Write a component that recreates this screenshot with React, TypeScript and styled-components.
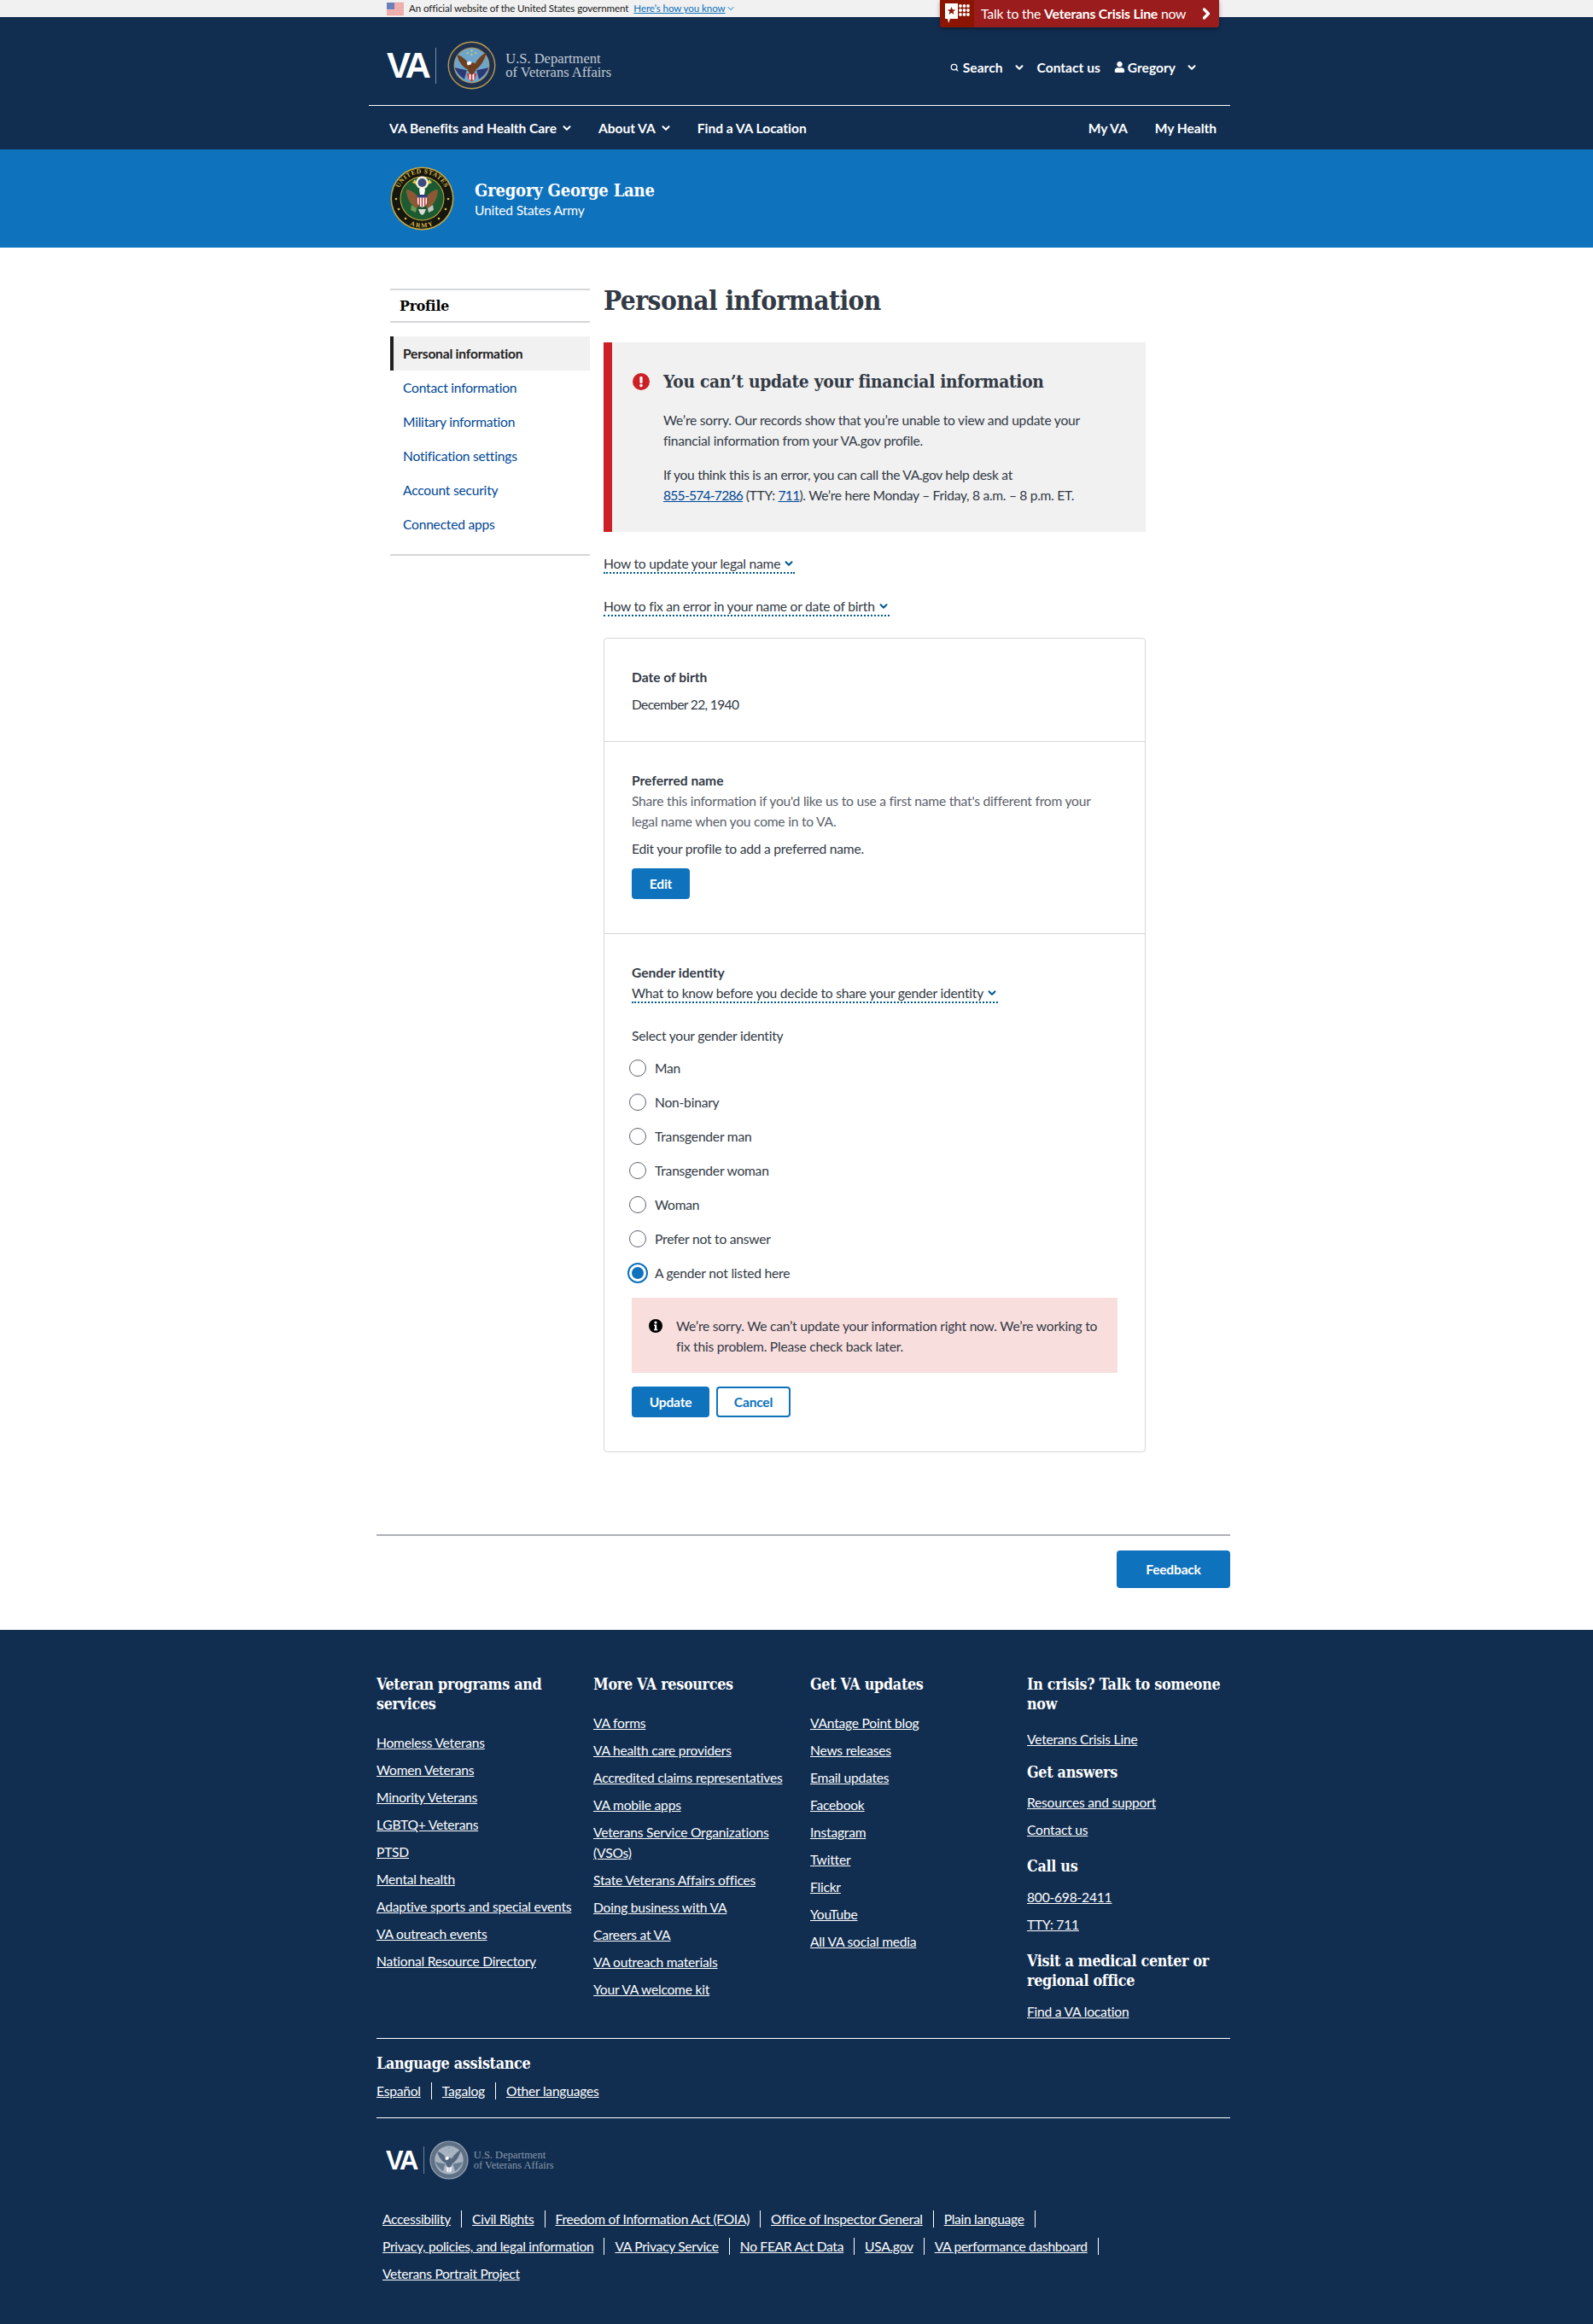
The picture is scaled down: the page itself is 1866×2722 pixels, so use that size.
import React from "react";
import styled, { createGlobalStyle } from "styled-components";
import { ChevronDown, ChevronRight, Search } from "lucide-react";
import { FaUser } from "react-icons/fa";

const SANS = `"Lato", "Noto Sans", sans-serif`;
const SERIF = `"DejaVu Serif Condensed", "DejaVu Serif", serif`;
const NAVY = "#112e51";
const BLUE = "#0e72bd";
const LINK = "#004795";

const Global = createGlobalStyle`
  html, body { margin: 0; padding: 0; background: #fff; }
  body { font-family: ${SANS}; font-size: 16px; line-height: 24px; color: #323a45; letter-spacing: -0.22px; }
  * { box-sizing: border-box; }
  ul { list-style: none; margin: 0; padding: 0; }
  p, h1, h2, h3, h4 { margin: 0; }
`;

const TopBar = styled.div`
  position: relative; height: 20px; background: #f1f1f1;
`;
const TopInner = styled.div`
  margin-left: 453px; height: 20px; display: flex; align-items: center; gap: 6px;
  font-size: 11.6px; line-height: 20px; color: #212121; letter-spacing: -0.1px;
`;
const HowLink = styled.a`
  margin-left: 0; color: ${BLUE}; text-decoration: underline; display: inline-flex; align-items: center;
`;
const CrisisBar = styled.div`
  position: absolute; left: 1101px; top: 0; width: 327px; height: 32px; background: #9b1c1c;
  border-radius: 0 0 3px 3px; box-shadow: 0 2px 5px rgba(0,0,0,.35); display: flex; align-items: center;
  color: #fff; font-size: 15.8px; z-index: 2; overflow: hidden;
`;
const CrisisIconBox = styled.div`
  width: 40px; height: 32px; background: #8b1500; display: flex; align-items: center; justify-content: center; flex: none;
`;
const CrisisText = styled.span`
  margin-left: 8px; flex: 1; white-space: nowrap; b { font-weight: 700; }
`;
const CrisisArrow = styled.span`
  display: flex; margin-right: 5px;
`;

const Header = styled.header`background: ${NAVY}; color: #fff;`;
const HeaderShell = styled.div`margin-left: 432px; width: 1009px;`;
const BrandRow = styled.div`
  height: 104px; border-bottom: 1px solid #fff; display: flex; align-items: center; justify-content: space-between;
  padding: 0 0 0 21px; position: relative;
`;
const Brand = styled.div`
  display: flex; align-items: center; height: 58px; margin-top: 10px;
`;
const VaMark = styled.span`
  font-family: "Liberation Sans", sans-serif; font-weight: 700; font-size: ${p => p.$size}px; line-height: 1; letter-spacing: ${p => p.$ls}px; color: #fff;
`;
const BrandRule = styled.span`
  width: 1px; height: ${p => p.$h}px; background: ${p => p.$c}; margin: 0 ${p => p.$m}px 0 ${p => p.$m2}px; flex: none;
`;
const BrandName = styled.div`
  font-family: "Liberation Serif", serif; font-size: ${p => p.$size}px; line-height: ${p => p.$lh}px; color: ${p => p.$c};
  letter-spacing: 0; white-space: nowrap; margin-left: ${p => p.$m}px;
`;
const Utility = styled.div`
  display: flex; align-items: center; margin-top: 14px; padding-right: 38px; font-weight: 700; font-size: 15.6px; white-space: nowrap; letter-spacing: 0;
`;
const UtilItem = styled.span`
  display: inline-flex; align-items: center; margin-left: ${p => p.$m || 0}px; gap: ${p => p.$g || 0}px;
`;
const NavRow = styled.nav`
  height: 51px; display: flex; align-items: center; justify-content: space-between; padding: 0 16px 0 24px;
  font-weight: 700; font-size: 15.6px; white-space: nowrap; letter-spacing: -0.05px;
`;
const NavGroup = styled.div`display: flex; align-items: center; gap: ${p => p.$g}px;`;
const NavItem = styled.span`display: inline-flex; align-items: center; gap: 5px;`;

const ProfileBanner = styled.div`
  height: 115px; background: ${BLUE}; color: #fff; display: flex; align-items: center; padding-left: 457px;
`;
const BannerText = styled.div`margin-left: 24px;`;
const BannerName = styled.h1`
  font-family: ${SERIF}; font-weight: 700; font-size: 20px; line-height: 26px; letter-spacing: -0.2px;
`;
const BannerSub = styled.p`font-size: 15.6px; line-height: 20px;`;

const Main = styled.main`
  margin-left: 457px; width: 885px; padding: 42px 0 96px; display: grid; grid-template-columns: 234px 635px; column-gap: 16px; align-items: start;
`;
const Side = styled.aside`
  margin-top: 6px; border-bottom: 2px solid #d6d7d9; padding-bottom: 15px; height: 313px;
`;
const SideTitle = styled.h2`
  font-family: ${SERIF}; font-size: 17.5px; font-weight: 700; color: #000; line-height: 24px;
  border-top: 2px solid #d6d7d9; border-bottom: 2px solid #d6d7d9; height: 40px; padding: 6px 0 0 11px; margin-bottom: 16px; letter-spacing: -0.2px;
`;
const SideItem = styled.li`
  height: 40px; display: flex; align-items: center; padding-left: ${p => p.$active ? 11 : 15}px; font-size: 15.6px;
  color: ${p => p.$active ? "#212121" : LINK}; font-weight: ${p => p.$active ? 700 : 400};
  background: ${p => p.$active ? "#f1f1f1" : "transparent"};
  border-left: ${p => p.$active ? "4px solid #212121" : "0"};
`;
const Content = styled.div``;
const PageTitle = styled.h1`
  font-family: ${SERIF}; font-size: 31.4px; line-height: 40px; font-weight: 700; color: #323a45; letter-spacing: -0.55px; white-space: nowrap;
`;
const AlertBox = styled.div`
  margin-top: 29px; height: 222px; background: #f1f1f1; border-left: 10px solid #cd2026; padding: 32px 24px 0 24px; position: relative;
`;
const AlertHead = styled.h2`
  font-family: ${SERIF}; font-size: 20.7px; line-height: 28px; font-weight: 700; color: #323a45; display: flex; align-items: center; gap: 16px; letter-spacing: -0.25px; margin-left: 0; white-space: nowrap;
`;
const AlertPara = styled.p`
  margin: ${p => p.$m}px 0 0 36px; font-size: 15.6px; letter-spacing: ${p => p.$ls || -0.22}px; color: #323a45; white-space: nowrap;
  a { color: ${LINK}; text-decoration: underline; letter-spacing: -0.75px; }
`;
const Toggle = styled.div`
  display: table; margin-top: ${p => p.$m}px; font-size: 15.6px; line-height: 19px; color: #323a45; border-bottom: 2px dotted #005a8c; white-space: nowrap;
  svg { vertical-align: -1px; margin-left: 3px; }
`;
const Card = styled.section`
  margin-top: 25px; border: 1px solid #d6d7d9; border-radius: 4px;
`;
const CardSection = styled.div`
  padding: 33px 32px ${p => p.$pb}px; border-bottom: ${p => p.$last ? "0" : "1px solid #d6d7d9"};
`;
const FieldLabel = styled.h3`font-size: 15.6px; font-weight: 700; color: #323a45; line-height: 24px; letter-spacing: 0;`;
const FieldText = styled.p`
  font-size: 15.6px; margin-top: ${p => p.$m || 0}px; color: ${p => p.$muted ? "#5b616b" : "#323a45"};
`;
const DateText = styled(FieldText)`letter-spacing: -0.65px;`;
const Btn = styled.button`
  display: block; font-family: ${SANS}; font-weight: 700; font-size: 15.6px; line-height: 20px; height: ${p => p.$h || 36}px; width: ${p => p.$w}px; border-radius: 4px;
  background: ${p => p.$outline ? "#fff" : BLUE}; color: ${p => p.$outline ? BLUE : "#fff"}; border: ${p => p.$outline ? `2px solid ${BLUE}` : "0"}; padding: 0; letter-spacing: -0.22px;
`;
const EditWrap = styled.div`margin-top: 11px;`;
const Radios = styled.div`margin-top: 6px; margin-left: -3px;`;
const RadioRow = styled.label`
  height: 40px; display: flex; align-items: center; gap: 10px; font-size: 15.6px; color: #323a45;
`;
const RadioDot = styled.span`
  width: 20px; height: 20px; border-radius: 50%; flex: none; background: ${p => p.$on ? BLUE : "#fff"};
  border: ${p => p.$on ? "3px solid #fff" : "1px solid #5b616b"};
  box-shadow: ${p => p.$on ? `0 0 0 2px ${BLUE}` : "none"};
`;
const ErrorBox = styled.div`
  margin-top: 9px; width: 569px; height: 88px; background: #f9dede; padding: 21px 20px 0 20px; display: flex; gap: 16px; font-size: 15.6px; color: #323a45;
`;
const ErrorIcon = styled.span`display: flex; height: 24px; align-items: center; flex: none;`;
const BtnRow = styled.div`display: flex; gap: 8px; margin-top: 16px;`;

const FeedbackWrap = styled.div`
  margin-left: 441px; width: 1000px; border-top: 2px solid #aeb0b5; padding: 17px 0 49px; display: flex; justify-content: flex-end;
`;

const Footer = styled.footer`background: ${NAVY}; color: #fff; padding: 52px 0 47px 441px; font-size: 15.6px;`;
const FooterBody = styled.div`width: 1000px;`;
const Cols = styled.div`
  display: grid; grid-template-columns: repeat(4, 230px); column-gap: 24px; padding-bottom: 19px; border-bottom: 1px solid #fff;
`;
const FootHead = styled.h4`
  font-family: ${SERIF}; font-weight: 700; font-size: 17.8px; line-height: 23px; margin-top: ${p => p.$m || 0}px; letter-spacing: -0.3px;
`;
const LinkList = styled.ul`margin-top: ${p => p.$m}px;`;
const FootLink = styled.li`
  margin-bottom: 8px; &:last-child { margin-bottom: 0; } text-decoration: underline;
`;
const InlineLinks = styled.div`
  display: flex; margin-top: ${p => p.$m}px;
`;
const LegalLinks = styled.div`
  display: flex; flex-direction: column; gap: 8px; padding-left: 7px; margin-top: 35px; letter-spacing: -0.3px;
`;
const LegalRow = styled.div`display: flex;`;
const InlineLink = styled.span`
  text-decoration: underline; white-space: nowrap;
`;
const Pipe = styled.span`
  width: 1px; height: 20px; margin: 2px 12px; background: #fff; flex: none;
`;
const LangBlock = styled.div`padding: 17px 0 19px; border-bottom: 1px solid #fff;`;
const FootBrand = styled.div`
  display: flex; align-items: center; height: 44px; margin: 27px 0 0 11px;
`;

const Flag = () => (
  <svg width="20" height="15" viewBox="0 0 20 15">
    <rect width="20" height="15" fill="#f3d0cf" />
    {[0, 2, 4, 6, 8, 10, 12].map(y => <rect key={y} y={y * 1.15} width="20" height="1.15" fill="#e9908c" />)}
    <rect width="9" height="8" fill="#6c7fb8" />
  </svg>
);

const CrisisIcon = () => (
  <svg width="30" height="26" viewBox="0 0 30 26">
    <path d="M1 1h15v18H7l-2 5-1-5H1z" fill="#fff" />
    <path d="M8.500 5l1.300 3.300 3.500.1-2.800 2.100 1 3.400-3-2-3 2 1-3.400-2.800-2.100 3.500-.1z" fill="#8b1500" />
    {[0, 1, 2].map(r => [0, 1, 2].map(c => (
      <circle key={`${r}${c}`} cx={19 + c * 4.500} cy={4 + r * 5} r="1.900" fill="#fff" />
    )))}
  </svg>
);

const VaSeal = ({ size, mono }: { size: number; mono?: boolean }) => {
  const c = mono
    ? { rim: "#9aa5b3", ring: "#5f7186", core: "#a9b4c1", wing: "#54677e", shield: "#6a7c91", red: "#c8d0d9", gold: "#8d9aa9" }
    : { rim: "#b79a4e", ring: "#20304f", core: "#6da5cc", wing: "#6d3f1f", shield: "#2b3a75", red: "#c4373b", gold: "#e9c85a" };
  return (
    <svg width={size} height={size} viewBox="0 0 60 60">
      <circle cx="30" cy="30" r="29.500" fill={c.rim} />
      <circle cx="30" cy="30" r="28" fill={c.ring} />
      <circle cx="30" cy="30" r="22" fill={c.rim} />
      <circle cx="30" cy="30" r="21" fill={c.core} />
      <path d="M9 33c3 7 8 12 12 14l3-11z" fill={c.shield} />
      <path d="M51 33c-3 7-8 12-12 14l-3-11z" fill={c.shield} />
      <path d="M24 40h12l-2 7-4 3-4-3z" fill={c.red} />
      <path d="M27 40h2v8h-2zM31 40h2v8h-2z" fill="#fff" />
      <path d="M12 17c5 1 11 5 15 13l-2 5c-6-3-11-9-13-18z" fill={c.wing} />
      <path d="M48 14c-5 3-11 8-15 16l1 6c7-4 12-12 14-22z" fill={c.wing} />
      <path d="M26 28c2-2 6-2 8 0l1 8-3 5h-4l-3-5z" fill={c.wing} />
      <path d="M24 27c1-2 4-3 6-1l-1 3-4 1z" fill="#fff" />
      <circle cx="25" cy="15" r="1.100" fill={c.gold} /><circle cx="30" cy="12" r="1.100" fill={c.gold} /><circle cx="30" cy="17" r="1.100" fill={c.gold} /><circle cx="35" cy="15" r="1.100" fill={c.gold} />
    </svg>
  );
};

const ArmySeal = () => (
  <svg width="75" height="75" viewBox="0 0 75 75">
    <circle cx="37.500" cy="37.500" r="37" fill="#c9a93c" />
    <circle cx="37.500" cy="37.500" r="35.500" fill="#15160f" />
    <circle cx="37.500" cy="37.500" r="26" fill="#c9a93c" />
    <circle cx="37.500" cy="37.500" r="25" fill="#1c5a32" />
    <defs>
      <path id="armyTop" d="M8 37.500a29.500 29.500 0 0 1 59 0" />
      <path id="armyBot" d="M3.500 37.500a34 34 0 0 0 68 0" />
    </defs>
    <text fontFamily="Liberation Serif" fontWeight="700" fontSize="7.600" fill="#d7b94a" letterSpacing="0.6">
      <textPath href="#armyTop" startOffset="50%" textAnchor="middle">UNITED STATES</textPath>
    </text>
    <text fontFamily="Liberation Serif" fontWeight="700" fontSize="7.600" fill="#d7b94a" letterSpacing="1.5">
      <textPath href="#armyBot" startOffset="50%" textAnchor="middle">ARMY</textPath>
    </text>
    {[[7, 38], [68, 38], [10, 50], [65, 50], [18, 61], [57, 61]].map(([x, y]) => (
      <circle key={`${x}-${y}`} cx={x} cy={y} r="1.300" fill="#d7b94a" />
    ))}
    <path d="M19 27c5 0 13 5 15 12l-2 10c-7-2-13-11-13-22z" fill="#8b5a34" />
    <path d="M56 27c-5 0-13 5-15 12l2 10c7-2 13-11 13-22z" fill="#8b5a34" />
    <path d="M33 22l-7-3 3-4zM42 22l7-3-3-4z" fill="#e1c544" />
    <circle cx="37.500" cy="19" r="7.500" fill="#f3efd8" />
    <circle cx="37.500" cy="19" r="5" fill="#3c4a80" />
    <path d="M34 27c1-2 6-2 7 0l-1 6h-5z" fill="#fff" />
    <path d="M32 33h11v9c0 3-3 5-5.500 6-2.500-1-5.500-3-5.500-6z" fill="#fff" />
    <path d="M32 33h11v3.500H32z" fill="#2f3f82" />
    <path d="M33.500 36.500h1.500v10h-1.500zM36.700 36.500h1.500v11h-1.500zM40 36.500h1.500v10H40z" fill="#c4373b" />
    <path d="M25 45l6 4-1 5-6-3z" fill="#6a9a55" />
    <path d="M50 45l-6 4 1 5 6-3z" fill="#c2c7bf" />
    <path d="M33 50h9l-2 5-2.500 2-2.500-2z" fill="#d9dbd5" />
  </svg>
);

const RedAlertIcon = () => (
  <svg width="20" height="20" viewBox="0 0 20 20" style={{ flex: "none" }}>
    <circle cx="10" cy="10" r="10" fill="#cd2026" />
    <rect x="8.400" y="4" width="3.200" height="8" rx="1.200" fill="#fff" />
    <circle cx="10" cy="14.600" r="1.800" fill="#fff" />
  </svg>
);

const InfoIcon = () => (
  <svg width="16" height="16" viewBox="0 0 16 16">
    <circle cx="8" cy="8" r="8" fill="#000" />
    <circle cx="8" cy="4" r="1.600" fill="#fff" />
    <path d="M6 6.600h3.200v5.200h1v1.400H6v-1.400h1V8H6z" fill="#fff" />
  </svg>
);

const Caret = ({ color = "#005a8c", size = 14 }: { color?: string; size?: number }) => (
  <ChevronDown size={size} color={color} strokeWidth={3.500} />
);

const genders = ["Man", "Non-binary", "Transgender man", "Transgender woman", "Woman", "Prefer not to answer", "A gender not listed here"];
const col1 = ["Homeless Veterans", "Women Veterans", "Minority Veterans", "LGBTQ+ Veterans", "PTSD", "Mental health", "Adaptive sports and special events", "VA outreach events", "National Resource Directory"];
const col2 = ["VA forms", "VA health care providers", "Accredited claims representatives", "VA mobile apps", "Veterans Service Organizations (VSOs)", "State Veterans Affairs offices", "Doing business with VA", "Careers at VA", "VA outreach materials", "Your VA welcome kit"];
const col3 = ["VAntage Point blog", "News releases", "Email updates", "Facebook", "Instagram", "Twitter", "Flickr", "YouTube", "All VA social media"];
const legal = [["Accessibility", "Civil Rights", "Freedom of Information Act (FOIA)", "Office of Inspector General", "Plain language"], ["Privacy, policies, and legal information", "VA Privacy Service", "No FEAR Act Data", "USA.gov", "VA performance dashboard"]];

export default function App() {
  return (
    <>
      <Global />
      <TopBar>
        <TopInner>
          <Flag />
          <span>An official website of the United States government</span>
          <HowLink>Here’s how you know<ChevronDown size={12} color={BLUE} strokeWidth={2} /></HowLink>
        </TopInner>
        <CrisisBar>
          <CrisisIconBox><CrisisIcon /></CrisisIconBox>
          <CrisisText>Talk to the <b>Veterans Crisis Line</b> now</CrisisText>
          <CrisisArrow><ChevronRight size={20} color="#fff" strokeWidth={4} /></CrisisArrow>
        </CrisisBar>
      </TopBar>
      <Header>
        <HeaderShell>
          <BrandRow>
            <Brand>
              <VaMark $size={42} $ls={-3.500}>VA</VaMark>
              <BrandRule $h={42} $c="#7d8ca0" $m={13} $m2={9} />
              <VaSeal size={57} />
              <BrandName $size={16.5} $lh={16} $c="#c4cad2" $m={11}>U.S. Department<br />of Veterans Affairs</BrandName>
            </Brand>
            <Utility>
              <UtilItem $g={5}><Search size={10} color="#fff" strokeWidth={3} />Search</UtilItem>
              <UtilItem $m={12}><Caret color="#fff" /></UtilItem>
              <UtilItem $m={14}>Contact us</UtilItem>
              <UtilItem $m={16} $g={3}><FaUser size={13} color="#fff" />Gregory</UtilItem>
              <UtilItem $m={12}><Caret color="#fff" /></UtilItem>
            </Utility>
          </BrandRow>
          <NavRow>
            <NavGroup $g={30}>
              <NavItem>VA Benefits and Health Care<Caret color="#fff" /></NavItem>
              <NavItem>About VA<Caret color="#fff" /></NavItem>
              <NavItem>Find a VA Location</NavItem>
            </NavGroup>
            <NavGroup $g={32}>
              <NavItem>My VA</NavItem>
              <NavItem>My Health</NavItem>
            </NavGroup>
          </NavRow>
        </HeaderShell>
      </Header>
      <ProfileBanner>
        <ArmySeal />
        <BannerText>
          <BannerName>Gregory George Lane</BannerName>
          <BannerSub>United States Army</BannerSub>
        </BannerText>
      </ProfileBanner>
      <Main>
        <Side>
          <SideTitle>Profile</SideTitle>
          <ul>
            <SideItem $active>Personal information</SideItem>
            <SideItem>Contact information</SideItem>
            <SideItem>Military information</SideItem>
            <SideItem>Notification settings</SideItem>
            <SideItem>Account security</SideItem>
            <SideItem>Connected apps</SideItem>
          </ul>
        </Side>
        <Content>
          <PageTitle>Personal information</PageTitle>
          <AlertBox>
            <AlertHead><RedAlertIcon />You can’t update your financial information</AlertHead>
            <AlertPara $m={19}>We’re sorry. Our records show that you’re unable to view and update your<br />financial information from your VA.gov profile.</AlertPara>
            <AlertPara $m={16} $ls={-0.3}>If you think this is an error, you can call the VA.gov help desk at<br /><a>855-574-7286</a> (TTY: <a>711</a>). We’re here Monday – Friday, 8 a.m. – 8 p.m. ET.</AlertPara>
          </AlertBox>
          <Toggle $m={28}>How to update your legal name<Caret /></Toggle>
          <Toggle $m={29}>How to fix an error in your name or date of birth<Caret /></Toggle>
          <Card>
            <CardSection $pb={31}>
              <FieldLabel>Date of birth</FieldLabel>
              <DateText $m={8}>December 22, 1940</DateText>
            </CardSection>
            <CardSection $pb={40}>
              <FieldLabel>Preferred name</FieldLabel>
              <FieldText $muted>Share this information if you'd like us to use a first name that's different from your legal name when you come in to VA.</FieldText>
              <FieldText $m={8}>Edit your profile to add a preferred name.</FieldText>
              <EditWrap><Btn $w={68}>Edit</Btn></EditWrap>
            </CardSection>
            <CardSection $pb={40} $last>
              <FieldLabel>Gender identity</FieldLabel>
              <Toggle $m={3}>What to know before you decide to share your gender identity<Caret /></Toggle>
              <FieldText $m={26}>Select your gender identity</FieldText>
              <Radios>
                {genders.map((g, i) => (
                  <RadioRow key={g}><RadioDot $on={i === genders.length - 1} />{g}</RadioRow>
                ))}
              </Radios>
              <ErrorBox>
                <ErrorIcon><InfoIcon /></ErrorIcon>
                <span>We’re sorry. We can’t update your information right now. We’re working to fix this problem. Please check back later.</span>
              </ErrorBox>
              <BtnRow>
                <Btn $w={91}>Update</Btn>
                <Btn $w={87} $outline>Cancel</Btn>
              </BtnRow>
            </CardSection>
          </Card>
        </Content>
      </Main>
      <FeedbackWrap><Btn $w={133} $h={44}>Feedback</Btn></FeedbackWrap>
      <Footer>
        <FooterBody>
          <Cols>
            <div>
              <FootHead>Veteran programs and services</FootHead>
              <LinkList $m={22}>{col1.map(l => <FootLink key={l}>{l}</FootLink>)}</LinkList>
            </div>
            <div>
              <FootHead>More VA resources</FootHead>
              <LinkList $m={22}>{col2.map(l => <FootLink key={l}>{l}</FootLink>)}</LinkList>
            </div>
            <div>
              <FootHead>Get VA updates</FootHead>
              <LinkList $m={22}>{col3.map(l => <FootLink key={l}>{l}</FootLink>)}</LinkList>
            </div>
            <div>
              <FootHead>In crisis? Talk to someone now</FootHead>
              <LinkList $m={18}><FootLink>Veterans Crisis Line</FootLink></LinkList>
              <FootHead $m={15}>Get answers</FootHead>
              <LinkList $m={12}><FootLink>Resources and support</FootLink><FootLink>Contact us</FootLink></LinkList>
              <FootHead $m={19}>Call us</FootHead>
              <LinkList $m={13}><FootLink>800-698-2411</FootLink><FootLink>TTY: 711</FootLink></LinkList>
              <FootHead $m={19}>Visit a medical center or regional office</FootHead>
              <LinkList $m={13}><FootLink>Find a VA location</FootLink></LinkList>
            </div>
          </Cols>
          <LangBlock>
            <FootHead>Language assistance</FootHead>
            <InlineLinks $m={9}>
              <InlineLink>Español</InlineLink><Pipe /><InlineLink>Tagalog</InlineLink><Pipe /><InlineLink>Other languages</InlineLink>
            </InlineLinks>
          </LangBlock>
          <FootBrand>
            <VaMark $size={31} $ls={-2.500}>VA</VaMark>
            <BrandRule $h={32} $c="#6f7f92" $m={6} $m2={8} />
            <VaSeal size={46} mono />
            <BrandName $size={12.5} $lh={12} $c="#8b98a8" $m={6}>U.S. Department<br />of Veterans Affairs</BrandName>
          </FootBrand>
          <LegalLinks>
            {legal.map((row, r) => (
              <LegalRow key={r}>
                {row.map(l => (
                  <React.Fragment key={l}><InlineLink>{l}</InlineLink><Pipe /></React.Fragment>
                ))}
              </LegalRow>
            ))}
            <LegalRow><InlineLink>Veterans Portrait Project</InlineLink></LegalRow>
          </LegalLinks>
        </FooterBody>
      </Footer>
    </>
  );
}
